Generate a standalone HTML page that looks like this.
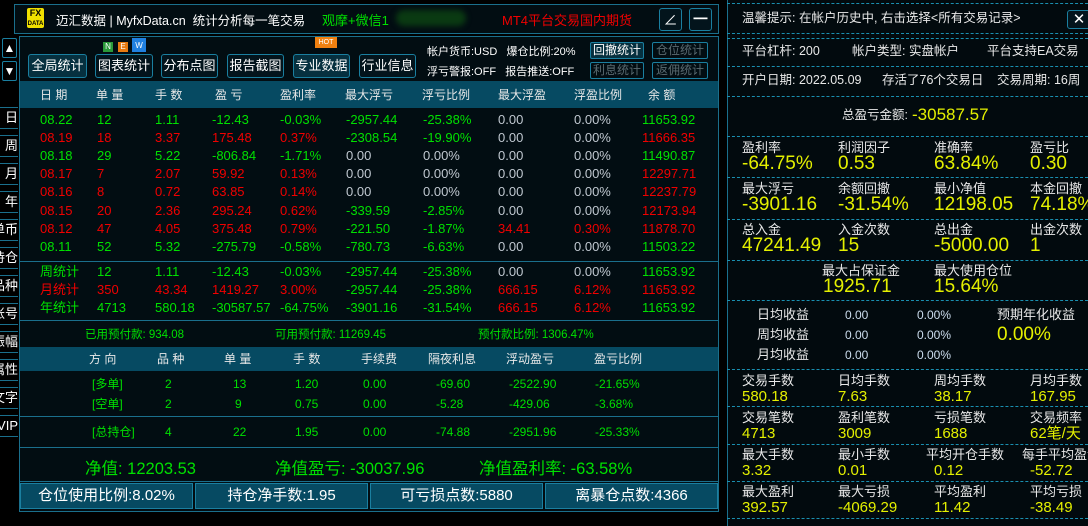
<!DOCTYPE html>
<html><head><meta charset="utf-8"><style>
*{margin:0;padding:0;box-sizing:border-box}
body{width:1088px;height:526px;background:#000;overflow:hidden;position:relative;font-family:"Liberation Sans","Noto Sans CJK SC",sans-serif;color:#e8e8e8;font-size:12px}
span,div{white-space:nowrap}
.a{position:absolute;white-space:nowrap}
.g{color:#00e000}.r{color:#f00000}.y{color:#e4f000}.w{color:#e8e8e8}.z{color:#c0c8d0}
.box{position:absolute;border:1px solid #1a6f8c}
.btn{position:absolute;border:1px solid #1a7fa0;border-radius:3px;color:#fff;font-size:13px;text-align:center;line-height:22px;background:#03141c}
.sb{position:absolute;border:1px solid #1a7fa0;border-radius:2px;font-size:12px;text-align:center;line-height:15px}
.row{position:absolute;left:0;width:700px;height:18px;font-size:13px;line-height:18px}
.row span{position:absolute;top:0}
.c1{left:40px}.c2{left:97px}.c3{left:155px}.c4{left:212px}.c5{left:280px}.c6{left:346px}.c7{left:423px}.c8{left:498px}.c9{left:574px}.c10{left:642px}
.tab{position:absolute;left:0;width:18px;height:22px;border-top:1px solid #1a6f8c;border-bottom:1px solid #1a6f8c;font-size:13px;line-height:20px;color:#fff;overflow:hidden;display:flex;justify-content:flex-end}
.dl{position:absolute;left:727px;width:361px;border-top:1px dashed #1a8fb0}
.lb{position:absolute;font-size:13px;line-height:14px;color:#e8e8e8;white-space:nowrap}
.vl{position:absolute;font-size:19px;line-height:20px;color:#e4f000;white-space:nowrap}
.vs{position:absolute;font-size:15px;line-height:16px;color:#e4f000;white-space:nowrap}
.pr{position:absolute;left:0;width:700px;height:16px;line-height:16px}
.pr span{position:absolute;font-size:12px;top:0}
</style></head><body>
<div class="box" style="left:14px;top:4px;width:705px;height:30px;background:#020d12"></div>
<div class="a" style="left:27px;top:8px;width:17px;height:20px;background:#f0e000;border-radius:2px;color:#000;font-weight:bold;font-size:9px;line-height:9px;text-align:center;padding-top:1px">FX<br><span style="font-size:6px">DATA</span></div>
<div class="a" style="left:56px;top:10px;font-size:12.5px;color:#fff">迈汇数据 | MyfxData.cn&nbsp; 统计分析每一笔交易</div>
<div class="a g" style="left:322px;top:10px;font-size:13px">观摩+微信1</div>
<div class="a" style="left:396px;top:10px;width:70px;height:16px;background:#0a3a12;border-radius:8px;filter:blur(3px)"></div>
<div class="a r" style="left:502px;top:10px;font-size:13px">MT4平台交易国内期货</div>
<div class="btn" style="left:659px;top:8px;width:23px;height:23px;font-size:14px">∠</div>
<div class="btn" style="left:689px;top:8px;width:23px;height:23px;font-size:14px;line-height:20px">━</div>
<div class="sb" style="left:2px;top:38px;width:15px;height:20px;color:#fff;line-height:18px">▲</div>
<div class="sb" style="left:2px;top:61px;width:15px;height:20px;color:#fff;line-height:18px">▼</div>
<div class="tab" style="top:107px">日</div><div class="tab" style="top:135px">周</div><div class="tab" style="top:163px">月</div><div class="tab" style="top:191px">年</div><div class="tab" style="top:219px">单币</div><div class="tab" style="top:247px">持仓</div><div class="tab" style="top:275px">品种</div><div class="tab" style="top:303px">账号</div><div class="tab" style="top:331px">振幅</div><div class="tab" style="top:359px">属性</div><div class="tab" style="top:387px">文字</div><div class="tab" style="top:415px">VIP</div>
<div class="box" style="left:19px;top:36px;width:700px;height:476px;background:#020d12"></div>
<div class="a" style="left:103px;top:42px;width:10px;height:10px;background:#2a9a3a;color:#fff;font-size:8px;text-align:center;line-height:10px">N</div>
<div class="a" style="left:118px;top:42px;width:10px;height:10px;background:#e87a10;color:#fff;font-size:8px;text-align:center;line-height:10px">E</div>
<div class="a" style="left:132px;top:38px;width:14px;height:14px;background:#2080e0;color:#fff;font-size:8px;text-align:center;line-height:16px">W</div>
<div class="a" style="left:315px;top:37px;width:22px;height:11px;background:#f08010;color:#fff;font-size:7px;text-align:center;line-height:11px">HOT</div>
<div class="btn" style="left:28px;top:54px;width:59px;height:24px;background:#06303f">全局统计</div>
<div class="btn" style="left:95px;top:54px;width:58px;height:24px">图表统计</div>
<div class="btn" style="left:161px;top:54px;width:57px;height:24px">分布点图</div>
<div class="btn" style="left:227px;top:54px;width:57px;height:24px">报告截图</div>
<div class="btn" style="left:293px;top:54px;width:57px;height:24px;background:#06303f">专业数据</div>
<div class="btn" style="left:359px;top:54px;width:57px;height:24px">行业信息</div>
<div class="a" style="left:427px;top:43px;font-size:11px;color:#fff">帐户货币:USD&nbsp;&nbsp; 爆仓比例:20%</div>
<div class="a" style="left:427px;top:63px;font-size:11px;color:#fff">浮亏警报:OFF&nbsp;&nbsp; 报告推送:OFF</div>
<div class="sb" style="left:590px;top:42px;width:54px;height:17px;color:#fff;background:#06303f">回撤统计</div>
<div class="sb" style="left:652px;top:42px;width:56px;height:17px;color:#5a6a70">仓位统计</div>
<div class="sb" style="left:590px;top:62px;width:54px;height:17px;color:#5a6a70">利息统计</div>
<div class="sb" style="left:652px;top:62px;width:56px;height:17px;color:#5a6a70">返佣统计</div>
<div class="a" style="left:20px;top:81px;width:698px;height:27px;background:#064a62"></div>
<div class="row w" style="top:86px;font-size:12px"><span style="left:40px">日 期</span><span style="left:96px">单 量</span><span style="left:155px">手 数</span><span style="left:215px">盈 亏</span><span style="left:280px">盈利率</span><span style="left:345px">最大浮亏</span><span style="left:422px">浮亏比例</span><span style="left:498px">最大浮盈</span><span style="left:574px">浮盈比例</span><span style="left:648px">余 额</span></div>
<div class="row g" style="top:111px"><span class="c1">08.22</span><span class="c2">12</span><span class="c3">1.11</span><span class="c4">-12.43</span><span class="c5">-0.03%</span><span class="c6">-2957.44</span><span class="c7">-25.38%</span><span class="c8 z">0.00</span><span class="c9 z">0.00%</span><span class="c10">11653.92</span></div>
<div class="row r" style="top:129px"><span class="c1">08.19</span><span class="c2">18</span><span class="c3">3.37</span><span class="c4">175.48</span><span class="c5">0.37%</span><span class="c6 g">-2308.54</span><span class="c7 g">-19.90%</span><span class="c8 z">0.00</span><span class="c9 z">0.00%</span><span class="c10">11666.35</span></div>
<div class="row g" style="top:147px"><span class="c1">08.18</span><span class="c2">29</span><span class="c3">5.22</span><span class="c4">-806.84</span><span class="c5">-1.71%</span><span class="c6 z">0.00</span><span class="c7 z">0.00%</span><span class="c8 z">0.00</span><span class="c9 z">0.00%</span><span class="c10">11490.87</span></div>
<div class="row r" style="top:165px"><span class="c1">08.17</span><span class="c2">7</span><span class="c3">2.07</span><span class="c4">59.92</span><span class="c5">0.13%</span><span class="c6 z">0.00</span><span class="c7 z">0.00%</span><span class="c8 z">0.00</span><span class="c9 z">0.00%</span><span class="c10">12297.71</span></div>
<div class="row r" style="top:183px"><span class="c1">08.16</span><span class="c2">8</span><span class="c3">0.72</span><span class="c4">63.85</span><span class="c5">0.14%</span><span class="c6 z">0.00</span><span class="c7 z">0.00%</span><span class="c8 z">0.00</span><span class="c9 z">0.00%</span><span class="c10">12237.79</span></div>
<div class="row r" style="top:202px"><span class="c1">08.15</span><span class="c2">20</span><span class="c3">2.36</span><span class="c4">295.24</span><span class="c5">0.62%</span><span class="c6 g">-339.59</span><span class="c7 g">-2.85%</span><span class="c8 z">0.00</span><span class="c9 z">0.00%</span><span class="c10">12173.94</span></div>
<div class="row r" style="top:220px"><span class="c1">08.12</span><span class="c2">47</span><span class="c3">4.05</span><span class="c4">375.48</span><span class="c5">0.79%</span><span class="c6 g">-221.50</span><span class="c7 g">-1.87%</span><span class="c8">34.41</span><span class="c9">0.30%</span><span class="c10">11878.70</span></div>
<div class="row g" style="top:238px"><span class="c1">08.11</span><span class="c2">52</span><span class="c3">5.32</span><span class="c4">-275.79</span><span class="c5">-0.58%</span><span class="c6">-780.73</span><span class="c7">-6.63%</span><span class="c8 z">0.00</span><span class="c9 z">0.00%</span><span class="c10">11503.22</span></div>
<div class="a" style="left:20px;top:261px;width:698px;border-top:1px solid #1a6f8c"></div>
<div class="row g" style="top:263px"><span class="c1">周统计</span><span class="c2">12</span><span class="c3">1.11</span><span class="c4">-12.43</span><span class="c5">-0.03%</span><span class="c6">-2957.44</span><span class="c7">-25.38%</span><span class="c8 z">0.00</span><span class="c9 z">0.00%</span><span class="c10">11653.92</span></div>
<div class="row r" style="top:281px"><span class="c1">月统计</span><span class="c2">350</span><span class="c3">43.34</span><span class="c4">1419.27</span><span class="c5">3.00%</span><span class="c6 g">-2957.44</span><span class="c7 g">-25.38%</span><span class="c8">666.15</span><span class="c9">6.12%</span><span class="c10">11653.92</span></div>
<div class="row g" style="top:299px"><span class="c1">年统计</span><span class="c2">4713</span><span class="c3">580.18</span><span class="c4">-30587.57</span><span class="c5">-64.75%</span><span class="c6">-3901.16</span><span class="c7">-31.54%</span><span class="c8 r">666.15</span><span class="c9 r">6.12%</span><span class="c10">11653.92</span></div>
<div class="a" style="left:20px;top:320px;width:698px;border-top:1px solid #1a6f8c"></div>
<div class="a g" style="left:85px;top:326px;font-size:11.5px">已用预付款: 934.08</div>
<div class="a g" style="left:275px;top:326px;font-size:11.5px">可用预付款: 11269.45</div>
<div class="a g" style="left:478px;top:326px;font-size:11.5px">预付款比例: 1306.47%</div>
<div class="a" style="left:20px;top:347px;width:698px;height:24px;background:#064a62"></div>
<div class="pr w" style="top:351px"><span style="left:89px">方 向</span><span style="left:157px">品 种</span><span style="left:224px">单 量</span><span style="left:293px">手 数</span><span style="left:361px">手续费</span><span style="left:428px">隔夜利息</span><span style="left:506px">浮动盈亏</span><span style="left:594px">盈亏比例</span></div>
<div class="pr g" style="top:376px"><span style="left:92px">[多单]</span><span style="left:165px">2</span><span style="left:233px">13</span><span style="left:295px">1.20</span><span style="left:363px">0.00</span><span style="left:436px">-69.60</span><span style="left:509px">-2522.90</span><span style="left:595px">-21.65%</span></div>
<div class="pr g" style="top:396px"><span style="left:92px">[空单]</span><span style="left:165px">2</span><span style="left:235px">9</span><span style="left:295px">0.75</span><span style="left:363px">0.00</span><span style="left:436px">-5.28</span><span style="left:509px">-429.06</span><span style="left:595px">-3.68%</span></div>
<div class="a" style="left:20px;top:416px;width:698px;border-top:1px solid #1a6f8c"></div>
<div class="pr g" style="top:424px"><span style="left:92px">[总持仓]</span><span style="left:165px">4</span><span style="left:233px">22</span><span style="left:295px">1.95</span><span style="left:363px">0.00</span><span style="left:436px">-74.88</span><span style="left:509px">-2951.96</span><span style="left:595px">-25.33%</span></div>
<div class="a" style="left:20px;top:447px;width:698px;border-top:1px solid #1a6f8c"></div>
<div class="a g" style="left:85px;top:455px;font-size:16.5px">净值: 12203.53</div>
<div class="a g" style="left:275px;top:455px;font-size:16.5px">净值盈亏: -30037.96</div>
<div class="a g" style="left:479px;top:455px;font-size:16.5px">净值盈利率: -63.58%</div>
<div class="a" style="left:20px;top:481px;width:698px;border-top:1px solid #1a6f8c"></div>
<div class="btn" style="left:20px;top:483px;width:173px;height:26px;background:#064a62;font-size:15px;line-height:24px;border-radius:0">仓位使用比例:8.02%</div>
<div class="btn" style="left:195px;top:483px;width:173px;height:26px;background:#064a62;font-size:15px;line-height:24px;border-radius:0">持仓净手数:1.95</div>
<div class="btn" style="left:370px;top:483px;width:173px;height:26px;background:#064a62;font-size:15px;line-height:24px;border-radius:0">可亏损点数:5880</div>
<div class="btn" style="left:545px;top:483px;width:173px;height:26px;background:#064a62;font-size:15px;line-height:24px;border-radius:0">离暴仓点数:4366</div>
<div class="a" style="left:727px;top:0;width:361px;height:526px;background:#020a0e;border-left:1px solid #1a6f8c"></div>
<div class="dl" style="top:3px"></div>
<div class="lb" style="left:742px;top:11px;font-size:12.5px">温馨提示: 在帐户历史中, 右击选择&lt;所有交易记录&gt;</div>
<div class="btn" style="left:1067px;top:10px;width:24px;height:19px;font-size:15px;line-height:17px">✕</div>
<div class="dl" style="top:33px"></div><div class="dl" style="top:38px"></div>
<div class="lb" style="left:742px;top:44px;font-size:12.5px">平台杠杆: 200</div><div class="lb" style="left:852px;top:44px;font-size:12.5px">帐户类型: 实盘帐户</div><div class="lb" style="left:987px;top:44px;font-size:12.5px">平台支持EA交易</div>
<div class="dl" style="top:66px"></div>
<div class="lb" style="left:742px;top:73px;font-size:12.5px">开户日期: 2022.05.09</div><div class="lb" style="left:882px;top:73px;font-size:12.5px">存活了76个交易日</div><div class="lb" style="left:997px;top:73px;font-size:12.5px">交易周期: 16周</div>
<div class="dl" style="top:96px"></div>
<div class="lb" style="left:842px;top:108px;font-size:12.5px">总盈亏金额:</div><div class="vl" style="left:912px;top:105px;font-size:17px">-30587.57</div>
<div class="dl" style="top:136px"></div>
<div class="lb" style="left:742px;top:141px">盈利率</div><div class="lb" style="left:838px;top:141px">利润因子</div><div class="lb" style="left:934px;top:141px">准确率</div><div class="lb" style="left:1030px;top:141px">盈亏比</div>
<div class="vl" style="left:742px;top:154px">-64.75%</div><div class="vl" style="left:838px;top:154px">0.53</div><div class="vl" style="left:934px;top:154px">63.84%</div><div class="vl" style="left:1030px;top:154px">0.30</div>
<div class="dl" style="top:177px"></div>
<div class="lb" style="left:742px;top:182px">最大浮亏</div><div class="lb" style="left:838px;top:182px">余额回撤</div><div class="lb" style="left:934px;top:182px">最小净值</div><div class="lb" style="left:1030px;top:182px">本金回撤</div>
<div class="vl" style="left:742px;top:195px">-3901.16</div><div class="vl" style="left:838px;top:195px">-31.54%</div><div class="vl" style="left:934px;top:195px">12198.05</div><div class="vl" style="left:1030px;top:195px">74.18%</div>
<div class="dl" style="top:219px"></div>
<div class="lb" style="left:742px;top:223px">总入金</div><div class="lb" style="left:838px;top:223px">入金次数</div><div class="lb" style="left:934px;top:223px">总出金</div><div class="lb" style="left:1030px;top:223px">出金次数</div>
<div class="vl" style="left:742px;top:236px">47241.49</div><div class="vl" style="left:838px;top:236px">15</div><div class="vl" style="left:934px;top:236px">-5000.00</div><div class="vl" style="left:1030px;top:236px">1</div>
<div class="dl" style="top:260px"></div>
<div class="lb" style="left:822px;top:264px">最大占保证金</div><div class="lb" style="left:934px;top:264px">最大使用仓位</div>
<div class="vl" style="left:823px;top:277px">1925.71</div><div class="vl" style="left:934px;top:277px">15.64%</div>
<div class="dl" style="top:300px"></div>
<div class="lb" style="left:757px;top:308px">日均收益</div><div class="lb" style="left:845px;top:308px;color:#cde;font-size:12px">0.00</div><div class="lb" style="left:917px;top:308px;color:#cde;font-size:12px">0.00%</div>
<div class="lb" style="left:757px;top:328px">周均收益</div><div class="lb" style="left:845px;top:328px;color:#cde;font-size:12px">0.00</div><div class="lb" style="left:917px;top:328px;color:#cde;font-size:12px">0.00%</div>
<div class="lb" style="left:757px;top:348px">月均收益</div><div class="lb" style="left:845px;top:348px;color:#cde;font-size:12px">0.00</div><div class="lb" style="left:917px;top:348px;color:#cde;font-size:12px">0.00%</div>
<div class="lb" style="left:997px;top:308px">预期年化收益</div><div class="vl" style="left:997px;top:325px">0.00%</div>
<div class="dl" style="top:369px"></div>
<div class="lb" style="left:742px;top:374px">交易手数</div><div class="lb" style="left:838px;top:374px">日均手数</div><div class="lb" style="left:934px;top:374px">周均手数</div><div class="lb" style="left:1030px;top:374px">月均手数</div>
<div class="vs" style="left:742px;top:389px">580.18</div><div class="vs" style="left:838px;top:389px">7.63</div><div class="vs" style="left:934px;top:389px">38.17</div><div class="vs" style="left:1030px;top:389px">167.95</div>
<div class="dl" style="top:406px"></div>
<div class="lb" style="left:742px;top:411px">交易笔数</div><div class="lb" style="left:838px;top:411px">盈利笔数</div><div class="lb" style="left:934px;top:411px">亏损笔数</div><div class="lb" style="left:1030px;top:411px">交易频率</div>
<div class="vs" style="left:742px;top:426px">4713</div><div class="vs" style="left:838px;top:426px">3009</div><div class="vs" style="left:934px;top:426px">1688</div><div class="vs" style="left:1030px;top:426px">62笔/天</div>
<div class="dl" style="top:444px"></div>
<div class="lb" style="left:742px;top:448px">最大手数</div><div class="lb" style="left:838px;top:448px">最小手数</div><div class="lb" style="left:926px;top:448px">平均开仓手数</div><div class="lb" style="left:1022px;top:448px">每手平均盈亏</div>
<div class="vs" style="left:742px;top:463px">3.32</div><div class="vs" style="left:838px;top:463px">0.01</div><div class="vs" style="left:934px;top:463px">0.12</div><div class="vs" style="left:1030px;top:463px">-52.72</div>
<div class="dl" style="top:481px"></div>
<div class="lb" style="left:742px;top:485px">最大盈利</div><div class="lb" style="left:838px;top:485px">最大亏损</div><div class="lb" style="left:934px;top:485px">平均盈利</div><div class="lb" style="left:1030px;top:485px">平均亏损</div>
<div class="vs" style="left:742px;top:500px">392.57</div><div class="vs" style="left:838px;top:500px">-4069.29</div><div class="vs" style="left:934px;top:500px">11.42</div><div class="vs" style="left:1030px;top:500px">-38.49</div>
<div class="dl" style="top:518px"></div>
</body></html>
